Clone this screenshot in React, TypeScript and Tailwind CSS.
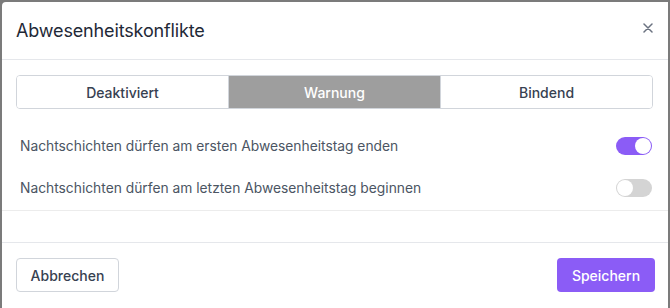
import React, { useState } from 'react';

const modes = ['Deaktiviert', 'Warnung', 'Bindend'];

const Toggle: React.FC<{ on: boolean; onClick: () => void }> = ({ on, onClick }) => (
  <button
    onClick={onClick}
    className={`relative w-[36px] h-[18px] rounded-full transition-colors ${on ? 'bg-[#8b5cf6]' : 'bg-[#d4d4d4]'}`}
  >
    <span
      className={`absolute top-[1px] w-[16px] h-[16px] rounded-full bg-white ${on ? 'left-[19px]' : 'left-[1px]'}`}
    />
  </button>
);

const App: React.FC = () => {
  const [mode, setMode] = useState(1);
  const [first, setFirst] = useState(true);
  const [last, setLast] = useState(false);

  const rules = [
    { label: 'Nachtschichten dürfen am ersten Abwesenheitstag enden', on: first, set: () => setFirst(!first) },
    { label: 'Nachtschichten dürfen am letzten Abwesenheitstag beginnen', on: last, set: () => setLast(!last) },
  ];

  return (
    <div className="h-[308px] w-[670px] overflow-hidden bg-[#7b7b7b] pt-[2px] pl-[2px] pr-[2px] font-['Inter',sans-serif]">
      <div className="bg-white rounded-tl-[4px] h-[320px] w-[666px]">
        {/* Header */}
        <div className="h-[58px] flex items-center justify-between pl-[14px] pr-[12px] border-b border-[#e5e7eb]">
          <h2 className="text-[18px] text-[#1f2937] tracking-[-0.15px]">Abwesenheitskonflikte</h2>
          <button className="text-[#6b7280] w-[16px] h-[16px] flex items-center justify-center -mt-[6px]">
            <svg width="10" height="10" viewBox="0 0 10 10" fill="none" stroke="currentColor" strokeWidth="1.5" strokeLinecap="round">
              <path d="M1 1l8 8M9 1l-8 8" />
            </svg>
          </button>
        </div>

        {/* Body */}
        <div className="pt-[15px] pl-[14px] pr-[15px]">
          <div className="flex h-[34px] border border-[#d1d5db] rounded-[4px] overflow-hidden">
            {modes.map((m, i) => (
              <button
                key={m}
                onClick={() => setMode(i)}
                className={`flex-1 text-[14px] font-medium ${i > 0 ? 'border-l border-[#d1d5db]' : ''} ${mode === i ? 'bg-[#9e9e9e] text-white' : 'bg-white text-[#374151]'}`}
              >
                {m}
              </button>
            ))}
          </div>
        </div>

        <div className="mt-[16px] border-b border-[#ececec] pb-[1px]">
          {rules.map((r) => (
            <div key={r.label} className="h-[42px] flex items-center justify-between pl-[18px] pr-[16px]">
              <span className="text-[13.8px] text-[#4b5563]">{r.label}</span>
              <Toggle on={r.on} onClick={r.set} />
            </div>
          ))}
        </div>

        <div className="h-[31px]" />

        {/* Footer */}
        <div className="border-t border-[#e5e7eb] flex items-center justify-between pt-[15px] pl-[14px] pr-[13px]">
          <button className="h-[34px] w-[103px] border border-[#d1d5db] rounded-[4px] text-[14px] font-medium text-[#374151] bg-white">
            Abbrechen
          </button>
          <button className="h-[34px] w-[98px] rounded-[4px] text-[14px] font-medium text-white bg-[#8b5cf6]">
            Speichern
          </button>
        </div>
      </div>
    </div>
  );
};

export default App;
